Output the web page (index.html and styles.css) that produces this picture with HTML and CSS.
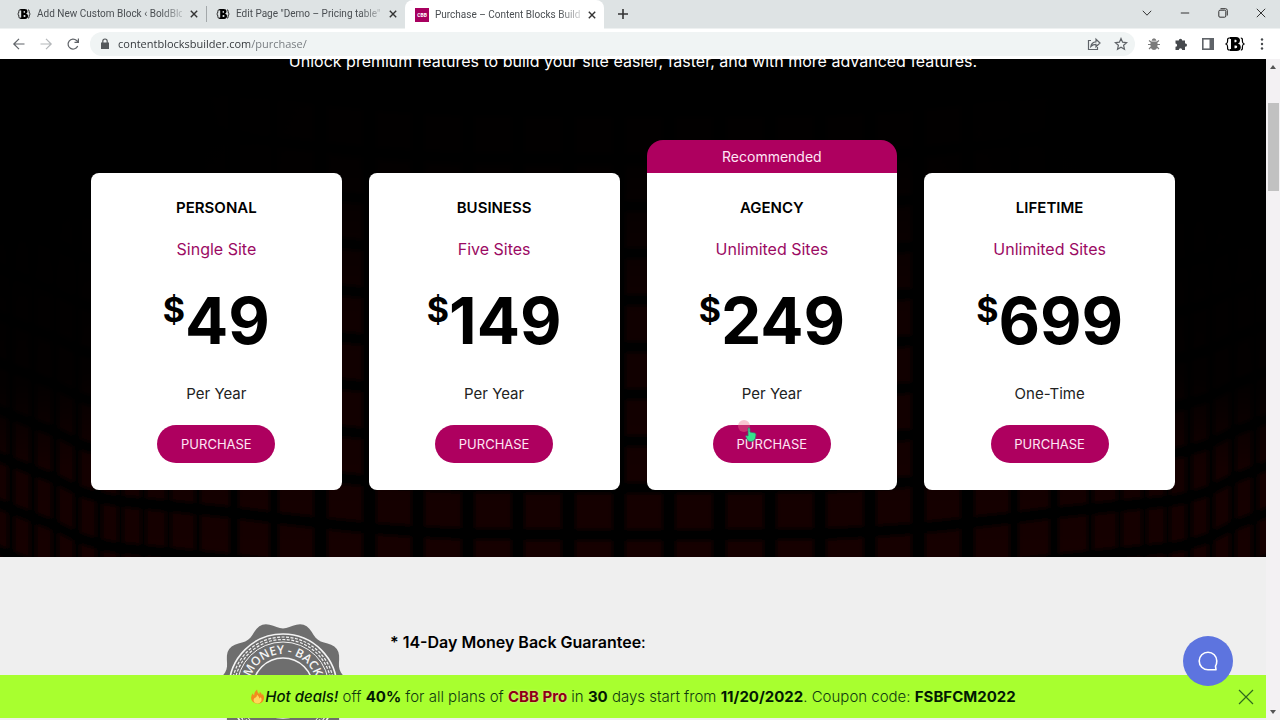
FILE: index.html
```html
<!DOCTYPE html>
<html lang="en">
<head>
<meta charset="utf-8">
<title>Purchase – Content Blocks Builder</title>
<link rel="stylesheet" href="styles.css">
</head>
<body>
<svg class="defs" aria-hidden="true">
  <symbol id="i-x" viewBox="0 0 10 10"><path d="M1.8 1.8l6.4 6.4M8.2 1.8L1.8 8.2" fill="none" stroke="currentColor" stroke-width="1.4"/></symbol>
  <symbol id="i-bold" viewBox="0 0 20 16"><path d="M4.200 2Q2.400 2 2.600 4.500Q2.800 7.500 1 8Q2.800 8.500 2.600 11.500Q2.400 14 4.200 14M15.800 2Q17.600 2 17.400 4.500Q17.200 7.500 19 8Q17.200 8.500 17.400 11.500Q17.600 14 15.800 14" fill="none" stroke="currentColor" stroke-width="1.200"/><path fill-rule="evenodd" fill="currentColor" d="M4.500 1H11Q15 1 15 4.500Q15 6.800 13 7.600Q15.800 8.400 15.800 11Q15.800 15 11.500 15H4.500V13H6V3H4.500ZM9.500 3.800V6.200H10.500Q11.600 6.200 11.600 5Q11.600 3.800 10.500 3.800ZM9.500 9.500V12.200H10.800Q12.200 12.200 12.200 10.800Q12.200 9.500 10.800 9.500Z"/></symbol>
</svg>

<header class="browser">
  <div class="tabs">
    <div class="tab">
      <svg class="fav"><use href="#i-bold"/></svg>
      <span class="tab-title">Add New Custom Block ‹ BoldBlo</span>
      <button class="tab-close" aria-label="Close tab"><svg><use href="#i-x"/></svg></button>
    </div>
    <div class="tab tab-divided">
      <svg class="fav"><use href="#i-bold"/></svg>
      <span class="tab-title">Edit Page "Demo – Pricing table"</span>
      <button class="tab-close" aria-label="Close tab"><svg><use href="#i-x"/></svg></button>
    </div>
    <div class="tab tab-active">
      <span class="fav fav-cbb">CBB</span>
      <span class="tab-title">Purchase – Content Blocks Builde</span>
      <button class="tab-close" aria-label="Close tab"><svg><use href="#i-x"/></svg></button>
    </div>
    <button class="new-tab" aria-label="New tab"><svg viewBox="0 0 12 12"><path d="M6 1v10M1 6h10" fill="none" stroke="currentColor" stroke-width="1.600"/></svg></button>
    <div class="window-buttons">
      <button aria-label="Search tabs"><svg viewBox="0 0 12 12"><path d="M1.800 3.800L6 8.200l4.200-4.400"/></svg></button>
      <button aria-label="Minimize"><svg viewBox="0 0 12 12"><path d="M1.800 6h8.400"/></svg></button>
      <button aria-label="Restore"><svg viewBox="0 0 12 12"><rect x="1.800" y="3.200" width="7" height="7" rx="1.200"/><path d="M3.500 1.700h5q1.800 0 1.800 1.800v5"/></svg></button>
      <button aria-label="Close window"><svg viewBox="0 0 12 12"><path d="M1.800 1.800l8.400 8.400M10.200 1.800l-8.400 8.400"/></svg></button>
    </div>
  </div>
  <div class="toolbar">
    <div class="nav">
      <button aria-label="Back"><svg viewBox="0 0 14 14"><path d="M12.500 7H2M7 1.800L1.800 7L7 12.200"/></svg></button>
      <button class="dim" aria-label="Forward"><svg viewBox="0 0 14 14"><path d="M1.500 7H12M7 1.800L12.200 7L7 12.200"/></svg></button>
      <button aria-label="Reload"><svg viewBox="0 0 14 14"><path d="M11.700 9A5 5 0 1 1 10.600 3.500L12 4.900M12.400 1.500V5.400H8.500"/></svg></button>
    </div>
    <form class="omnibox">
      <svg class="lock" viewBox="0 0 10 12"><path d="M1 4.500h8v6.500H1z" fill="currentColor"/><path d="M2.800 5V3.200a2.200 2.200 0 0 1 4.400 0V5" fill="none" stroke="currentColor" stroke-width="1.200"/></svg>
      <input type="text" aria-label="Address" value="contentblocksbuilder.com/purchase/">
      <button type="button" aria-label="Share"><svg viewBox="0 0 14 14"><path d="M4 3.500H1.500v9h9V10M3.800 9.500Q4.500 5 9 4.800V2.200L13 6L9 9.800V7.400Q5.800 7.400 3.800 9.500Z"/></svg></button>
      <button type="button" aria-label="Bookmark"><svg viewBox="0 0 14 14"><path d="M7 1.500l1.600 3.700 4 .4-3 2.700.9 4L7 10.200l-3.500 2.100.9-4-3-2.700 4-.4z"/></svg></button>
    </form>
    <div class="extensions">
      <button class="bug" aria-label="Bug extension"><svg viewBox="0 0 14 14"><path d="M2 3.500L4 5M1 7.500H4M2 12l2-2M12 3.500L10 5M13 7.500H10M12 12l-2-2"/><path fill="currentColor" stroke="none" d="M4.500 3.800Q5 1.200 7 1.200T9.500 3.800ZM3.600 4.600H10.400Q11.400 13 7 13T3.600 4.600Z"/></svg></button>
      <button class="dark" aria-label="Extensions"><svg viewBox="0 0 14 14"><path fill="currentColor" stroke="none" d="M1.500 3.500H4.800A1.700 1.700 0 1 1 8.200 3.500H11V6.500A1.600 1.600 0 1 1 11 9.600V13H8.200A1.700 1.700 0 1 0 4.800 13H1.500V9.800A1.600 1.600 0 1 0 1.500 6.600Z"/></svg></button>
      <button aria-label="Side panel"><svg viewBox="0 0 14 14"><rect x="1.800" y="1.800" width="10.400" height="10.400" stroke-width="1.600"/><path fill="currentColor" stroke="none" d="M8.500 2h4v10h-4z"/></svg></button>
      <button class="bold-ext" aria-label="Profile"><svg><use href="#i-bold"/></svg></button>
      <button class="dark" aria-label="Menu"><svg viewBox="0 0 14 14"><g fill="currentColor" stroke="none"><circle cx="7" cy="2.500" r="1.200"/><circle cx="7" cy="7" r="1.200"/><circle cx="7" cy="11.500" r="1.200"/></g></svg></button>
    </div>
  </div>
</header>

<div class="viewport">
  <div class="page">
    <main class="content">
      <section class="hero">
        <svg class="hero-pattern" viewBox="0 0 1266 498" preserveAspectRatio="none" aria-hidden="true">
          <defs>
            <linearGradient id="fade" x1="0" y1="0" x2="0" y2="1"><stop offset="0" stop-color="#fff" stop-opacity=".04"/><stop offset=".22" stop-color="#fff" stop-opacity=".12"/><stop offset=".5" stop-color="#fff" stop-opacity=".7"/><stop offset="1" stop-color="#fff"/></linearGradient>
            <radialGradient id="side"><stop offset="0" stop-color="#000"/><stop offset=".7" stop-color="#000" stop-opacity=".8"/><stop offset="1" stop-color="#000" stop-opacity="0"/></radialGradient>
            <mask id="fade-mask"><rect width="1266" height="498" fill="url(#fade)"/><ellipse cx="0" cy="140" rx="330" ry="270" fill="url(#side)"/><ellipse cx="1266" cy="140" rx="330" ry="270" fill="url(#side)"/></mask>
            <filter id="soft"><feGaussianBlur stdDeviation="2"/></filter>
          </defs>
          <g mask="url(#fade-mask)"><path id="cells" fill="#180001" filter="url(#soft)"/></g>
        </svg>
        <p class="lead">Unlock premium features to build your site easier, faster, and with more advanced features.</p>
        <div class="plans">
          <article class="plan">
            <h2>PERSONAL</h2><p class="sites">Single Site</p>
            <p class="price"><span>$</span>49</p><p class="term">Per Year</p>
            <button class="buy">PURCHASE</button>
          </article>
          <article class="plan">
            <h2>BUSINESS</h2><p class="sites">Five Sites</p>
            <p class="price"><span>$</span>149</p><p class="term">Per Year</p>
            <button class="buy">PURCHASE</button>
          </article>
          <article class="plan plan-featured">
            <div class="badge">Recommended</div>
            <h2>AGENCY</h2><p class="sites">Unlimited Sites</p>
            <p class="price"><span>$</span>249</p><p class="term">Per Year</p>
            <button class="buy">PURCHASE
              <svg class="cursor" viewBox="0 0 20 24" aria-hidden="true"><circle cx="7" cy="7" r="6" fill="#ef6f8b" opacity=".4"/><path d="M11 9q1.200-.8 2 .5v3.500l5 1q1.200.5 1 2l-.7 3.500q-1 3-4 3h-1.500q-2 0-3-2.500L8.500 17q.8-1 2.500 0z" fill="#35e58c" stroke="#4f6070" stroke-width=".8"/></svg>
            </button>
          </article>
          <article class="plan">
            <h2>LIFETIME</h2><p class="sites">Unlimited Sites</p>
            <p class="price"><span>$</span>699</p><p class="term">One-Time</p>
            <button class="buy">PURCHASE</button>
          </article>
        </div>
      </section>
      <section class="guarantee">
        <svg class="seal" viewBox="-70 -70 140 140" role="img" aria-label="Money back seal">
          <path id="scallop" fill="#6e6e6e"/>
          <g fill="none" stroke="#f4f4f4"><circle r="54" stroke-width="1.600"/><circle r="51" stroke-width="1.200" stroke-dasharray="3 1.500"/><circle r="48.500" stroke-width="1.200" stroke-dasharray="3 1.500" stroke-dashoffset="2"/><circle r="46" stroke-width="1"/><circle r="30" stroke-width="1.600"/></g>
          <path id="arc" d="M-11 32.100A34 34 0 1 1 11 32.100" fill="none"/>
          <text class="seal-text"><textPath href="#arc" startOffset="50%">MONEY - BACK</textPath></text>
        </svg>
        <p class="guarantee-text"><strong>* 14-Day Money Back Guarantee</strong>:</p>
      </section>
    </main>
    <aside class="deal">
      <p><svg class="fire" viewBox="0 0 16 16" aria-hidden="true"><path fill="#f28c1e" d="M8 15.500C3 15.500.8 12 1.200 9Q1.500 6 3 4.500Q3.300 6.500 4.500 7Q4.200 3 7.500.5Q7.500 3.500 9.800 5.500Q10.500 4.500 10.200 3Q12.500 4 12.700 6.500Q13.500 6 13.500 5Q15.500 8 14.800 10.800Q13.500 15.500 8 15.500Z"/><path fill="#ffd75a" d="M8 15.500Q3.500 15.200 3.800 11.500Q4.200 9.500 6 9Q7.500 8 7.500 6Q10 8 10.200 10Q11.300 9.500 11.500 8.500Q13 11 11.800 13.300Q10.500 15.500 8 15.500Z"/></svg><em>Hot deals!</em> off <strong>40%</strong> for all plans of <strong class="pro">CBB Pro</strong> in <strong>30</strong> days start from <strong>11/20/2022</strong>. Coupon code: <strong>FSBFCM2022</strong></p>
      <button class="dismiss" aria-label="Dismiss"><svg viewBox="0 0 16 16"><path d="M1 1l14 14M15 1L1 15" fill="none" stroke="currentColor" stroke-width="1.200"/></svg></button>
    </aside>
    <button class="chat" aria-label="Open chat"><svg viewBox="0 0 24 24"><path d="M20 20.800h-8a8.800 8.800 0 1 1 8.800-8.800q0 3-1.300 5.200z" fill="none" stroke="#fff" stroke-width="1.600" stroke-linejoin="round"/></svg></button>
  </div>
  <div class="scrollbar" aria-hidden="true"><i class="up"></i><i class="thumb"></i><i class="down"></i></div>
</div>
<script src="pattern.js"></script>
</body>
</html>
```
FILE: styles.css
```css
* { box-sizing: border-box; }
body { margin: 0; height: 100vh; display: flex; flex-direction: column; overflow: hidden; font-family: Inter, "Liberation Sans", sans-serif; font-size: 15px; line-height: 24px; color: #000; }
p, h2 { margin: 0; }
button { border: 0; padding: 0; margin: 0; background: none; font: inherit; color: inherit; display: flex; align-items: center; justify-content: center; }
svg { display: block; }
.defs { position: absolute; width: 0; height: 0; }

.browser { font-family: Roboto, "Open Sans", sans-serif; flex: none; color: #4a4e52; }
.tabs { display: flex; height: 29px; padding-left: 7px; background: #dee3e4; border-bottom: 1px solid #eef1f1; }
.tab { width: 199px; height: 28px; padding: 0 6px 0 10px; display: flex; align-items: center; gap: 6px; font-size: 10px; line-height: 16px; }
.tab-divided { background: linear-gradient(#a3a8aa, #a3a8aa) 0 50% / 1px 16px no-repeat; }
.tab-active { height: 29px; background: #fff; border-radius: 8px 8px 0 0; }
.fav { width: 14px; height: 14px; flex: none; color: #000; }
.fav-cbb { background: #a8005f; color: #fff; font-size: 5px; font-weight: 700; line-height: 14px; text-align: center; }
.tab-title { flex: 1; min-width: 0; white-space: nowrap; mask-image: linear-gradient(90deg, #000 85%, transparent 105%); }
.tab-close { width: 12px; height: 16px; flex: none; color: #333; }
.tab-close svg { width: 10px; height: 10px; }
.new-tab { width: 38px; height: 28px; color: #333; }
.new-tab svg { width: 12px; height: 12px; }
.window-buttons { margin-left: auto; display: flex; }
.window-buttons button { width: 38px; height: 26px; }
.window-buttons svg { width: 12px; height: 12px; fill: none; stroke: #333; stroke-width: 1; }
.toolbar { display: flex; align-items: center; height: 30px; background: #fff; padding: 0 5px; }
.toolbar button { width: 27px; height: 24px; color: #5f6368; }
.toolbar button.dim { color: #b4b7ba; }
.toolbar button.dark { color: #46494d; }
.toolbar button.bug { color: #7b7b7b; }
.toolbar svg { width: 14px; height: 14px; fill: none; stroke: currentColor; stroke-width: 1.2px; }
.nav { display: flex; width: 85px; }
.omnibox { flex: 1; display: flex; align-items: center; height: 24px; padding: 0 1px 0 10px; border-radius: 12px; background: #f0f4f4; }
.toolbar .lock { width: 10px; height: 12px; color: #55595c; stroke: none; }
.omnibox input { flex: 1; min-width: 0; margin-left: 8px; padding: 0; border: 0; outline: 0; font: 11px/16px "Open Sans", sans-serif; color: transparent; background: linear-gradient(90deg, #2f3337 132px, #72777b 132px); background-clip: text; -webkit-background-clip: text; }
.extensions { display: flex; margin-left: 5px; }
.toolbar button.bold-ext { color: #000; }
.toolbar .bold-ext svg { width: 20px; height: 16px; stroke: none; }

.viewport { flex: 1; min-height: 0; display: flex; }
.page { flex: 1; position: relative; overflow: hidden; background: #efefef; }
.hero { position: relative; overflow: hidden; background: #000; padding: 0 24px 67px; }
.hero-pattern { position: absolute; inset: 0; width: 100%; height: 100%; }
.lead { position: relative; margin-top: -10px; color: #fff; font-size: 16px; text-align: center; }
.plans { position: relative; max-width: 1084px; margin: 100px auto 0; display: grid; grid-template-columns: repeat(4, 1fr); gap: 27px; }
.plan { position: relative; display: flex; flex-direction: column; align-items: center; padding: 23px 16px 27px; border-radius: 8px; background: #fff; }
.plan-featured { border-radius: 0 0 8px 8px; }
.badge { position: absolute; left: 0; right: 0; bottom: 100%; height: 33px; border-radius: 16px 16px 0 0; background: #ae005f; color: #ffe6f5; font-size: 14px; line-height: 33px; text-align: center; }
.plan h2 { font-size: 15px; font-weight: 600; }
.sites { margin-top: 17px; color: #9b0a63; font-size: 16px; }
.price { margin-top: 24px; display: flex; align-items: flex-start; font-size: 64px; line-height: 72px; font-weight: 700; }
.price span { font-size: 34px; line-height: 50px; }
.term { margin-top: 25px; color: #222; }
.buy { position: relative; width: 118px; height: 38px; margin-top: 19px; border-radius: 19px; background: #ae005f; color: #ffe6f5; font-size: 13px; }
.cursor { position: absolute; left: 24px; top: -6px; width: 20px; height: 24px; pointer-events: none; }
.guarantee { display: flex; align-items: flex-start; gap: 37px; max-width: 840px; margin: 0 auto; padding-top: 61px; }
.seal { width: 140px; height: 140px; }
.seal-text { font: 600 12px "Open Sans", sans-serif; fill: #f4f4f4; text-anchor: middle; }
.guarantee-text { padding-top: 12px; font-size: 16px; }
.guarantee-text strong { font-weight: 600; }
.deal { position: absolute; left: 0; right: 0; bottom: 2px; height: 43px; padding: 0 12px 0 28px; display: flex; align-items: center; background: #a8ff2f; color: #0f3a10; font-weight: 300; }
.deal p { flex: 1; text-align: center; }
.deal strong, .deal em { color: #031a03; }
.deal em { font-weight: 500; }
.deal strong { font-weight: 700; }
.deal .pro { color: #8d0014; text-shadow: 0 0 2px #fbd9c0; }
.fire { display: inline-block; width: 15px; height: 15px; vertical-align: -2px; }
.dismiss { width: 16px; height: 24px; color: #2e6b1d; }
.dismiss svg { width: 16px; height: 16px; }
.chat { position: absolute; right: 33px; bottom: 34px; width: 50px; height: 50px; border-radius: 50%; background: #5d74df; }
.chat svg { width: 24px; height: 24px; }
.scrollbar { width: 14px; flex: none; display: flex; flex-direction: column; align-items: center; padding: 6px 0; background: #f3f1f3; }
.up, .down { width: 0; height: 0; border: 3px solid transparent; }
.up { border-top: 0; border-bottom: 4px solid #555; }
.down { border-bottom: 0; border-top: 4px solid #555; margin-top: auto; }
.thumb { width: 11px; height: 88px; margin-top: 34px; background: #c1c1c1; }
```
FILE: pattern.js
```js
// Curved wall of dark cells: columns narrow and rows rise towards both sides.
const edges = [0, 50, 101, 151, 201, 250, 299, 348, 390, 429, 461, 488, 512, 534, 556, 578, 600, 622, 644, 668];
const curve = [[0, 0], [200, 2], [270, 7], [348, 15], [404, 22], [460, 28], [530, 35], [560, 42], [585, 55], [644, 78], [700, 105]];
const rise = u => {
  for (let i = 1; i < curve.length; i++) {
    const [a, p] = curve[i - 1], [b, q] = curve[i];
    if (u <= b) return p + (q - p) * (u - a) / (b - a);
  }
  return 105;
};
let d = "";
for (const side of [-1, 1]) {
  edges.forEach((e, i) => {
    if (side > 0 && i === 0) return;
    const pitch = i ? e - edges[i - 1] : 50, half = pitch * 0.37;
    for (let row = -8; row < 5; row++) {
      const y = 435 + row * 47;
      const l = e - half, r = e + half, x = u => 644 + side * u;
      d += `M${x(l)} ${y - rise(Math.abs(l))}L${x(r)} ${y - rise(r)}V${y + 36 - rise(r)}L${x(l)} ${y + 36 - rise(Math.abs(l))}Z`;
    }
  });
}
document.getElementById("cells").setAttribute("d", d);

// Scalloped rim of the seal, ten lobes.
let s = "";
for (let a = 0; a < 360; a += 3) {
  const t = a * Math.PI / 180, r = 63 - 3.5 * Math.cos(10 * t);
  s += `${a ? "L" : "M"}${(r * Math.sin(t)).toFixed(2)} ${(-r * Math.cos(t)).toFixed(2)}`;
}
document.getElementById("scallop").setAttribute("d", s + "Z");
```
